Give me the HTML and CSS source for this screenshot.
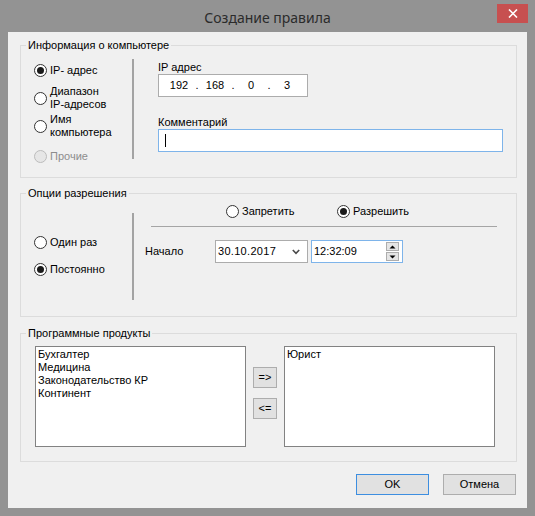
FILE: index.html
```html
<!DOCTYPE html>
<html lang="ru">
<head>
<meta charset="utf-8">
<title>Создание правила</title>
<link rel="stylesheet" href="styles.css">
</head>
<body>
<div class="window">
  <div class="titlebar">
    <span class="title">Создание правила</span>
    <div class="close">
      <svg width="10" height="9" viewBox="0 0 10 9"><path d="M1 0.5 L9 8.5 M9 0.5 L1 8.5" stroke="#fff" stroke-width="1.6" fill="none"/></svg>
    </div>
  </div>
  <div class="client">
    <div class="group g1">
      <span class="legend">Информация о компьютере</span>
      <div class="inner">
        <div class="radios r1">
          <div class="ropt o1"><span class="radio checked"></span><span class="rlabel">IP- адрес</span></div>
          <div class="ropt o2"><span class="radio"></span><span class="rlabel">Диапазон<br>IP-адресов</span></div>
          <div class="ropt o3"><span class="radio"></span><span class="rlabel">Имя<br>компьютера</span></div>
          <div class="ropt o4 disabled"><span class="radio"></span><span class="rlabel">Прочие</span></div>
        </div>
        <div class="vsep s1"></div>
        <div class="rcol1">
          <div class="flabel">IP адрес</div>
          <div class="ipbox">
            <span class="oct">192</span><span class="dot">.</span><span class="oct">168</span><span class="dot">.</span><span class="oct">0</span><span class="dot">.</span><span class="oct">3</span>
          </div>
          <div class="flabel cl">Комментарий</div>
          <div class="combox"><span class="caret"></span></div>
        </div>
      </div>
    </div>

    <div class="group g2">
      <span class="legend">Опции разрешения</span>
      <div class="inner">
        <div class="radios r2">
          <div class="ropt2 p1"><span class="radio"></span><span class="rlabel">Один раз</span></div>
          <div class="ropt2 p2"><span class="radio checked"></span><span class="rlabel">Постоянно</span></div>
        </div>
        <div class="vsep s2"></div>
        <div class="rcol2">
          <div class="toprow">
            <div class="ropt2 deny"><span class="radio"></span><span class="rlabel">Запретить</span></div>
            <div class="ropt2"><span class="radio checked"></span><span class="rlabel">Разрешить</span></div>
          </div>
          <div class="hline"></div>
          <div class="ctlrow">
            <span class="start">Начало</span>
            <div class="datebox">
              <span>30.10.2017</span>
              <svg class="chev" width="8" height="6" viewBox="0 0 8 6"><path d="M0.8 1 L4 4.4 L7.2 1" stroke="#4a4a4a" stroke-width="1.6" fill="none"/></svg>
            </div>
            <div class="timebox">
              <span>12:32:09</span>
              <div class="spin">
                <div class="sbtn"><svg width="7" height="4" viewBox="0 0 7 4"><path d="M0.5 3.5 L3.5 0.5 L6.5 3.5 Z" fill="#000"/></svg></div>
                <div class="sbtn"><svg width="7" height="4" viewBox="0 0 7 4"><path d="M0.5 0.5 L3.5 3.5 L6.5 0.5 Z" fill="#000"/></svg></div>
              </div>
            </div>
          </div>
        </div>
      </div>
    </div>

    <div class="group g3">
      <span class="legend">Программные продукты</span>
      <div class="inner3">
        <div class="listbox">
          <div>Бухгалтер</div>
          <div>Медицина</div>
          <div>Законодательство КР</div>
          <div>Континент</div>
        </div>
        <div class="movebtns">
          <div class="btn small">=&gt;</div>
          <div class="btn small">&lt;=</div>
        </div>
        <div class="listbox">
          <div>Юрист</div>
        </div>
      </div>
    </div>

    <div class="footer">
      <div class="btn big default">OK</div>
      <div class="btn big">Отмена</div>
    </div>
  </div>
</div>
</body>
</html>
```
FILE: styles.css
```css
* { box-sizing: border-box; }
html, body { margin: 0; padding: 0; }
body {
  width: 535px;
  height: 516px;
  overflow: hidden;
  background: #939393;
  font-family: "Liberation Sans", Arial, sans-serif;
  font-size: 11px;
  line-height: 13px;
  color: #000;
}
.window {
  width: 535px;
  height: 516px;
  background: #939393;
  padding: 0 8px 8px 8px;
  display: flex;
  flex-direction: column;
}
.titlebar {
  height: 32px;
  position: relative;
  display: flex;
  align-items: center;
  justify-content: center;
}
.title {
  font-family: "Noto Sans", "Open Sans", sans-serif;
  font-size: 14px;
  color: #2b2b2b;
  line-height: 18px;
  margin-top: 3px;
}
.close {
  position: absolute;
  right: -1px;
  top: 4px;
  width: 31px;
  height: 19px;
  background: #c75050;
  display: flex;
  align-items: center;
  justify-content: center;
}
.client {
  flex: 1;
  background: #f0f0f0;
  padding-top: 13px;
  display: flex;
  flex-direction: column;
}
.group {
  position: relative;
  border: 1px solid #dcdcdc;
  margin-left: 12px;
  width: 497px;
}
.legend {
  position: absolute;
  left: 5px;
  top: -7px;
  background: #f0f0f0;
  padding: 0 2px;
  line-height: 13px;
}
.g1 { height: 133px; }
.g2 { height: 124px; margin-top: 15px; }
.g3 { height: 129px; margin-top: 16px; }

.inner {
  display: flex;
  align-items: flex-start;
}
.radios {
  width: 111px;
  padding-left: 13px;
  display: flex;
  flex-direction: column;
}
.radio {
  width: 13px;
  height: 13px;
  flex: none;
  border: 1px solid #333;
  border-radius: 50%;
  background: #fff;
  display: flex;
  align-items: center;
  justify-content: center;
}
.radio.checked::after {
  content: "";
  width: 7px;
  height: 7px;
  border-radius: 50%;
  background: #1a1a1a;
}
.ropt {
  height: 26px;
  display: flex;
  align-items: center;
}
.rlabel { margin-left: 3px; white-space: nowrap; }
.r1 { margin-top: 11px; }
.o2 { margin-top: 2px; }
.o3 { margin-top: 2px; }
.o4 { margin-top: 4px; }
.disabled .radio { border-color: #bcbcbc; background: #e6e6e6; }
.disabled .rlabel { color: #8d8d8d; }

.vsep {
  width: 2px;
  background: #a3a3a3;
  flex: none;
}
.s1 { margin-top: 13px; height: 100px; }
.rcol1 { margin-left: 24px; margin-top: 15px; }
.flabel { height: 13px; }
.flabel.cl { margin-top: 19px; }
.ipbox {
  width: 150px;
  height: 23px;
  border: 1px solid #acacac;
  background: #fff;
  display: flex;
  align-items: center;
  padding-left: 8px;
}
.oct { width: 24px; text-align: center; }
.dot { width: 12px; text-align: center; }
.combox {
  width: 345px;
  height: 23px;
  border: 1px solid #7eb4ea;
  background: #fff;
  display: flex;
  align-items: center;
  padding-left: 6px;
}
.caret { width: 1px; height: 13px; background: #000; }

.r2 { margin-top: 42px; }
.ropt2 {
  height: 13px;
  display: flex;
  align-items: center;
}
.p2 { margin-top: 14px; }
.s2 { margin-top: 19px; height: 87px; }
.rcol2 { margin-left: 11px; margin-top: 11px; }
.toprow {
  display: flex;
  padding-left: 81px;
}
.deny { width: 111px; }
.hline {
  margin-top: 8px;
  margin-left: 6px;
  width: 346px;
  height: 1px;
  background: #a5a5a5;
}
.ctlrow {
  margin-top: 13px;
  display: flex;
  align-items: center;
}
.start { width: 70px; }
.datebox {
  width: 93px;
  height: 23px;
  border: 1px solid #acacac;
  background: #fff;
  display: flex;
  align-items: center;
  padding-left: 2px;
  padding-right: 7px;
  justify-content: space-between;
  letter-spacing: 0.3px;
}
.timebox {
  margin-left: 3px;
  width: 92px;
  height: 23px;
  border: 1px solid #7eb4ea;
  background: #fff;
  display: flex;
  align-items: center;
  padding-left: 2px;
  padding-right: 3px;
  justify-content: space-between;
}
.spin {
  display: flex;
  flex-direction: column;
  gap: 1px;
}
.sbtn {
  width: 13px;
  height: 9px;
  border: 1px solid #adadad;
  background: #e5e5e5;
  display: flex;
  align-items: center;
  justify-content: center;
}

.inner3 {
  display: flex;
  align-items: flex-start;
  padding-left: 14px;
  padding-top: 12px;
}
.listbox {
  width: 211px;
  height: 101px;
  border: 1px solid #828282;
  background: #fff;
  padding: 1px 2px;
}
.movebtns {
  margin: 21px 7px 0 7px;
  display: flex;
  flex-direction: column;
  gap: 10px;
}
.btn {
  border: 1px solid #adadad;
  background: #e1e1e1;
  display: flex;
  align-items: center;
  justify-content: center;
}
.btn.small { width: 24px; height: 21px; }
.btn.big { width: 73px; height: 21px; }
.btn.default { border-color: #3d8ee0; }
.footer {
  margin-top: 12px;
  display: flex;
  justify-content: flex-end;
  gap: 14px;
  padding-right: 11px;
}
```
